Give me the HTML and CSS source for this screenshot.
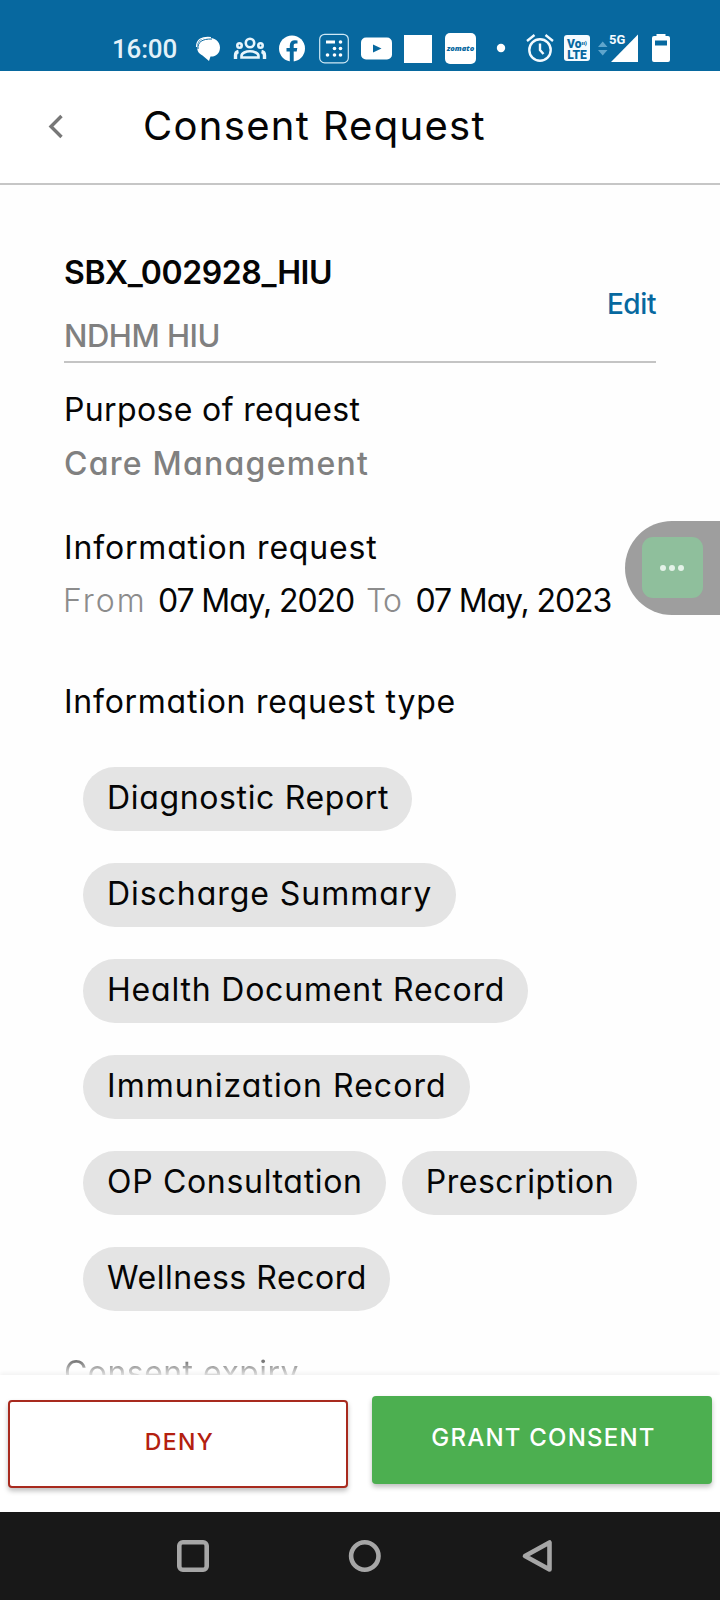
FILE: index.html
```html
<!DOCTYPE html>
<html lang="en">
<head>
<meta charset="utf-8">
<title>Consent Request</title>
<link rel="stylesheet" href="styles.css">
</head>
<body>
<div class="screen">
  <div class="status">
    <span class="clock">16:00</span>
    <svg width="37" height="40" viewBox="192 28 37 40"><path d="M208 37.500C214 37.500 220 41 220 47.500C220 54 215 57 210.500 56.500L209 61L202.500 55.500C198 53 196.500 50 197.500 45C199 40 203 37.500 208 37.500Z" fill="#fff"/><path d="M196.500 47C196.500 39.500 202 36.500 211 37.500" fill="none" stroke="#fff" stroke-width="1.200"/><path d="M198 49C197.500 42 202 38.800 212 39" fill="none" stroke="#07689f" stroke-width="1"/></svg>
    <svg width="42" height="40" viewBox="229 28 42 40" fill="none" stroke="#e8f5fc" stroke-width="2.600"><circle cx="250" cy="43" r="4.200"/><circle cx="239.500" cy="45.500" r="2.200"/><circle cx="260.500" cy="45.500" r="2.200"/><path d="M241.500 57.500V56C241.500 53 246 51.200 250 51.200S258.500 53 258.500 56V57.500Z"/><path d="M238.500 51.500C236 52 235.500 53.500 235.500 55.500V59M261.500 51.500C264 52 264.500 53.500 264.500 55.500V59" stroke-width="3.400"/></svg>
    <svg width="42" height="40" viewBox="271 28 42 40"><circle cx="292" cy="48.500" r="13" fill="#fff"/><path d="M289.800 62V51.500H286.500V48H289.800V45.500C289.800 42 291.800 40.200 294.900 40.200L297.500 40.400V43.500H295.800C294.200 43.500 293.700 44.300 293.700 45.700V48H297.300L296.700 51.500H293.700V62Z" fill="#07689f"/></svg>
    <svg width="42" height="40" viewBox="313 28 42 40"><rect x="319.700" y="34.300" width="28.600" height="28.600" rx="5" fill="none" stroke="#cfe8f5" stroke-width="1.200"/><path d="M326 42H335" stroke="#fff" stroke-width="3"/><g fill="#fff"><circle cx="340.500" cy="42" r="1.800"/><circle cx="334.500" cy="48.500" r="1.800"/><circle cx="340.500" cy="48.500" r="1.800"/><circle cx="327.500" cy="55" r="1.800"/><circle cx="334.500" cy="55" r="1.800"/><circle cx="340.500" cy="55" r="1.800"/></g></svg>
    <svg width="42" height="40" viewBox="355 28 42 40"><rect x="361" y="37.500" width="31" height="22" rx="5" fill="#fff"/><path d="M373 44.500L381.500 48.500L373 52.500Z" fill="#07689f"/></svg>
    <svg width="42" height="40" viewBox="397 28 42 40"><path d="M404 35H432V63H404Z" fill="#fff"/></svg>
    <span class="zomato">zomato</span>
    <svg width="44" height="40" viewBox="478 28 44 40"><circle cx="501" cy="48" r="4.200" fill="#fff"/></svg>
    <svg width="38" height="40" viewBox="522 28 38 40" fill="none" stroke="#f2faff" stroke-width="2.400"><circle cx="540" cy="50" r="10.700"/><path d="M540 43.500V50L543.500 54M527 41L534.500 35M553 41L545.500 35"/></svg>
    <span class="volte"><span>Vo<i>ıı)</i></span><span>LTE</span></span>
    <span class="signal">
      <svg width="50" height="40" viewBox="594 28 50 40"><path d="M598 47L602.700 41.500L607.500 47ZM598 50L602.700 55.500L607.500 50Z" fill="#5fa5cc"/><path d="M611 62L638 34.500V62Z" fill="#fff"/></svg>
      <b class="net">5G</b>
    </span>
    <svg width="30" height="40" viewBox="646 28 30 40"><path d="M656.500 34H665.500V36H668Q670 36 670 38V60Q670 62 668 62H654Q652 62 652 60V38Q652 36 654 36H656.500Z" fill="#fff"/><path d="M655 40.500H667V45.500H655Z" fill="#07689f"/></svg>
  </div>
  <header class="header">
    <svg class="back" width="20" height="32" viewBox="46 111 20 32"><path d="M61.500 117L51 127.500L61.500 138" fill="none" stroke="#777" stroke-width="3.400"/></svg>
    <h1 class="title">Consent Request</h1>
  </header>
  <main class="content">
    <section class="requester">
      <div>
        <div class="name">SBX_002928_HIU</div>
        <div class="org">NDHM HIU</div>
      </div>
      <a class="edit">Edit</a>
    </section>
    <div class="line purpose">Purpose of request</div>
    <div class="line care">Care Management</div>
    <div class="line info">Information request</div>
    <div class="line range"><span class="from">From</span><span class="date">07 May, 2020</span><span class="to">To</span><span class="date">07 May, 2023</span></div>
    <div class="line type">Information request type</div>
    <div class="chips">
      <span class="chip diagnostic">Diagnostic Report</span>
      <span class="chip discharge">Discharge Summary</span>
      <span class="chip health">Health Document Record</span>
      <span class="chip immun">Immunization Record</span>
      <span class="chip op">OP Consultation</span>
      <span class="chip presc">Prescription</span>
      <span class="chip wellness">Wellness Record</span>
    </div>
    <div class="line expiry">Consent expiry</div>
  </main>
  <footer class="actions">
    <button class="btn deny">DENY</button>
    <button class="btn grant">GRANT CONSENT</button>
  </footer>
  <nav class="nav">
    <svg width="720" height="40" viewBox="0 1536 720 40" fill="none" stroke="#a6a6a6" stroke-width="4.600"><rect x="179.300" y="1542.300" width="27.400" height="27.400" rx="3.500"/><circle cx="364.800" cy="1556" r="13.700"/><path d="M525 1556L549.500 1542.500V1569.500Z" stroke-linejoin="round"/></svg>
  </nav>
  <div class="bubble"><div class="bubble-icon"><i></i><i></i><i></i></div></div>
</div>
</body>
</html>
```
FILE: styles.css
```css
* { box-sizing: border-box; }
body {
  margin: 0;
  background: #fefefe;
  font-family: Inter, "Liberation Sans", sans-serif;
  font-feature-settings: "cv11";
  color: #050505;
}
.screen {
  position: relative;
  display: flex;
  flex-direction: column;
  width: 720px;
  height: 1600px;
  overflow: hidden;
}
svg { display: block; flex: none; }

.status {
  flex: none;
  display: flex;
  align-items: flex-start;
  height: 71px;
  padding: 28px 0 0 112px;
  background: #07689f;
}
.clock {
  width: 80px;
  font: 500 26px/40px Roboto, sans-serif;
  letter-spacing: -0.2px;
  color: #e3f1f9;
  padding-top: 1px;
}
.zomato {
  width: 31px;
  height: 31px;
  margin: 5px 2px 0 6px;
  border-radius: 5px;
  background: #fff;
  color: #07689f;
  font: italic 800 7.5px/30px "Open Sans", sans-serif;
  text-align: center;
}
.volte {
  display: flex;
  flex-direction: column;
  width: 26px;
  height: 26px;
  margin: 7px 4px 0;
  padding-top: 2px;
  border-radius: 3px;
  background: #f5fbff;
  color: #07689f;
  font: 900 12px/11px Roboto, sans-serif;
  text-align: center;
}
.volte i { font-size: 6px; font-style: normal; vertical-align: 3px; }
.signal { position: relative; width: 52px; }
.net {
  position: absolute;
  left: 15px;
  top: 5px;
  font: 700 13px/14px Roboto, sans-serif;
  color: #f5fbff;
}

.header {
  flex: none;
  display: flex;
  align-items: center;
  height: 114px;
  padding: 0 0 2px 46px;
  border-bottom: 2px solid #c6c6c6;
  background: #fff;
}
.title {
  margin: 0 0 0 77px;
  font-size: 40px;
  line-height: 48px;
  font-weight: 400;
  letter-spacing: 1.3px;
}

.content {
  flex: none;
  height: 1190px;
  padding: 68px 64px 0;
  overflow: hidden;
}
.requester {
  display: flex;
  justify-content: space-between;
  align-items: flex-start;
  height: 110px;
  border-bottom: 2px solid #c4c4c4;
}
.name {
  font-size: 32px;
  line-height: 40px;
  font-weight: 600;
  letter-spacing: -0.41px;
}
.org {
  margin-top: 23px;
  font-size: 31px;
  line-height: 40px;
  font-weight: 500;
  letter-spacing: -0.5px;
  color: #808080;
}
.edit {
  margin-top: 31px;
  font-size: 28px;
  line-height: 40px;
  font-weight: 500;
  letter-spacing: -0.42px;
  color: #07689f;
}
.line { font-size: 32px; line-height: 40px; white-space: nowrap; }
.purpose { margin-top: 27px; letter-spacing: 0.36px; }
.care { margin-top: 14px; font-weight: 500; letter-spacing: 1.25px; color: #808080; }
.info { margin-top: 44px; letter-spacing: 0.83px; }
.range { display: flex; margin-top: 13px; }
.from { width: 95px; margin-left: -1px; font-weight: 300; letter-spacing: 2px; color: #8c8c8c; }
.date { width: 208px; letter-spacing: -1.11px; }
.to { width: 49px; font-weight: 300; letter-spacing: -0.84px; color: #8c8c8c; }
.date:last-child { margin-left: 0.5px; }
.type { margin-top: 61px; letter-spacing: 0.74px; }
.chips {
  display: flex;
  flex-wrap: wrap;
  gap: 32px 16px;
  margin-top: 45px;
  padding-left: 19px;
}
.chip {
  height: 64px;
  padding: 11px 23px 0 24px;
  border-radius: 32px;
  background: #e4e4e4;
  font-size: 32px;
  line-height: 40px;
  white-space: nowrap;
}
.diagnostic { letter-spacing: 0.65px; }
.discharge { letter-spacing: 0.95px; padding-right: 24px; }
.health { letter-spacing: 0.8px; }
.immun { letter-spacing: 1.05px; }
.op { letter-spacing: 0.68px; }
.presc { letter-spacing: 0.55px; }
.wellness { letter-spacing: 0.55px; }
.expiry {
  margin-top: 42px;
  letter-spacing: 0.45px;
  color: transparent;
  background: linear-gradient(#777 20%, #eee 58%);
  background-clip: text;
}

.actions {
  position: relative;
  flex: none;
  display: flex;
  gap: 24px;
  height: 137px;
  padding: 21px 8px 0;
  background: #fff;
  box-shadow: 0 -2px 4px rgba(0, 0, 0, 0.05);
}
.btn {
  width: 340px;
  height: 88px;
  border: 0;
  border-radius: 4px;
  padding: 0 0 4px 3px;
  font: 500 24px/40px Inter, sans-serif;
  box-shadow: 0 3px 5px rgba(0, 0, 0, 0.25);
}
.deny {
  margin-top: 4px;
  border: 2px solid #a82a1e;
  background: #fff;
  color: #b3200f;
  font-size: 23px;
  letter-spacing: 1.4px;
}
.grant { background: #4caf50; color: #fff; letter-spacing: 1.21px; }

.nav { flex: none; height: 88px; padding-top: 24px; background: #181818; }

.bubble {
  position: absolute;
  right: 0;
  top: 521px;
  width: 95px;
  height: 94px;
  padding: 16px 0 0 16.500px;
  border-radius: 47px 0 0 47px;
  background: #9e9e9e;
}
.bubble-icon {
  display: flex;
  align-items: center;
  justify-content: center;
  gap: 3px;
  width: 61px;
  height: 61px;
  border-radius: 11px;
  background: #8fbf9c;
}
.bubble-icon i { width: 6px; height: 6px; border-radius: 50%; background: #e4f2e8; }
```
